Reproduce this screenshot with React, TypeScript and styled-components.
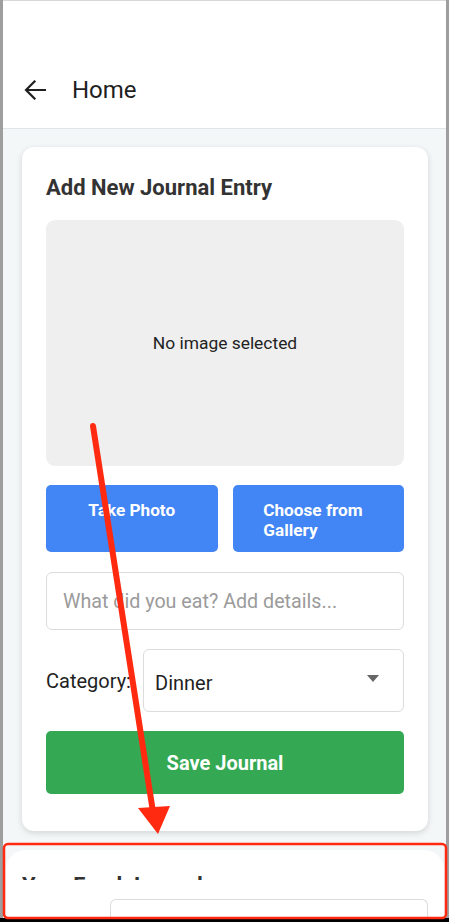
import React from "react";
import styled, { createGlobalStyle } from "styled-components";

const Global = createGlobalStyle`
  html, body { margin: 0; padding: 0; background: #000; }
  body { font-family: Roboto, "Noto Sans", Arial, sans-serif; }
  * { box-sizing: border-box; }
`;

const Frame = styled.div`
  position: relative;
  width: 449px;
  height: 922px;
  overflow: hidden;
  background: #000;
`;

const Screen = styled.div`
  height: 918px;
  margin: 0 3px 0 3px;
  border-top: 1px solid #d8d8d8;
  background: #f4f7f8;
  display: flex;
  flex-direction: column;
  overflow: hidden;
`;

const SideBar = styled.div<{ $side: "left" | "right" }>`
  position: absolute;
  top: 0;
  ${(p) => p.$side}: 0;
  width: 3px;
  height: 918px;
  background: #9e9e9e;
`;

const Header = styled.header`
  flex: none;
  height: 128px;
  background: #fff;
  border-bottom: 1px solid #e2e5e7;
  display: flex;
  align-items: flex-start;
  padding: 75px 0 0 20px;
  gap: 25px;
`;

const BackButton = styled.button`
  border: none;
  background: none;
  padding: 0;
  width: 24px;
  height: 28px;
  display: flex;
  align-items: center;
  justify-content: center;
  color: #1f1f1f;
`;

const HeaderTitle = styled.h1`
  margin: 0;
  font-size: 24px;
  font-weight: 400;
  color: #1f1f1f;
  line-height: 28px;
`;

const Content = styled.main`
  flex: 1;
  padding: 18px 18px 0 19px;
  display: flex;
  flex-direction: column;
`;

const Card = styled.section`
  background: #fff;
  border-radius: 12px;
  box-shadow: 0 2px 6px rgba(0, 0, 0, 0.14);
  padding: 28px 24px 37px 24px;
  display: flex;
  flex-direction: column;
`;

const CardTitle = styled.h2`
  margin: 0 0 19px 0;
  font-size: 22px;
  line-height: 26px;
  font-weight: 700;
  color: #333;
`;

const ImageBox = styled.div`
  height: 246px;
  background: #efefef;
  border-radius: 9px;
  display: flex;
  align-items: center;
  justify-content: center;
  font-size: 17.4px;
  color: #222;
  margin-bottom: 19px;
`;

const ButtonRow = styled.div`
  display: grid;
  grid-template-columns: 1fr 1fr;
  gap: 15px;
  margin-bottom: 20px;
`;

const BlueButton = styled.button`
  height: 67px;
  border: none;
  border-radius: 5px;
  background: #4285f4;
  color: #fff;
  font-family: Roboto, Arial, sans-serif;
  font-size: 17.2px;
  font-weight: 700;
  line-height: 20px;
  padding: 15px 12px 0;
  display: flex;
  justify-content: center;
  align-items: flex-start;
  text-align: left;
`;

const ButtonLabel = styled.span`
  display: block;
  max-width: 110px;
`;

const TextInput = styled.div`
  height: 58px;
  border: 1px solid #dcdcdc;
  border-radius: 6px;
  padding: 0 16px;
  display: flex;
  align-items: center;
  font-size: 19.7px;
  color: #9b9b9b;
  margin-bottom: 19px;
`;

const CategoryRow = styled.div`
  display: flex;
  align-items: center;
  margin-bottom: 19px;
`;

const CategoryLabel = styled.span`
  font-size: 20px;
  color: #1f1f1f;
  width: 97px;
  white-space: nowrap;
`;

const SelectBox = styled.div`
  flex: 1;
  height: 63px;
  border: 1px solid #dcdcdc;
  border-radius: 6px;
  display: flex;
  align-items: center;
  justify-content: space-between;
  padding: 4px 24px 0 11px;
  font-size: 20px;
  color: #1f1f1f;
`;

const Caret = styled.span`
  width: 0;
  height: 0;
  border-left: 6px solid transparent;
  border-right: 6px solid transparent;
  border-top: 7px solid #666;
  margin-top: -8px;
`;

const SaveButton = styled.button`
  height: 63px;
  border: none;
  border-radius: 5px;
  background: #34a853;
  color: #fff;
  font-family: Roboto, Arial, sans-serif;
  font-size: 20px;
  font-weight: 700;
`;

const JournalCard = styled.section`
  margin: 19px -16px 0 -16px;
  flex: 1;
  background: #fff;
  border-radius: 20px 20px 0 0;
  padding: 25px 0 0 16px;
  display: flex;
  flex-direction: column;
`;

const JournalTitleClip = styled.div`
  height: 5px;
  overflow: hidden;
`;

const JournalTitle = styled.h2`
  margin: 0;
  font-size: 22px;
  line-height: 22px;
  font-weight: 700;
  color: #333;
`;

const SearchBox = styled.div`
  margin: 19px 16px 0 88px;
  flex: 1;
  border: 1px solid #dcdcdc;
  border-bottom: none;
  border-radius: 6px 6px 0 0;
`;

const Overlay = styled.svg`
  position: absolute;
  inset: 0;
  pointer-events: none;
`;

const BottomBar = styled.div`
  height: 4px;
  background: #000;
`;

export default function App() {
  return (
    <>
      <Global />
      <Frame>
        <SideBar $side="left" />
        <SideBar $side="right" />
        <Screen>
          <Header>
            <BackButton aria-label="Back">
              <svg width="22" height="20" viewBox="0 0 22 20" fill="none">
                <path d="M21 10H2.5M10.5 1.5 2 10l8.5 8.5" stroke="#1f1f1f" strokeWidth="2.2" strokeLinecap="square" />
              </svg>
            </BackButton>
            <HeaderTitle>Home</HeaderTitle>
          </Header>
          <Content>
            <Card>
              <CardTitle>Add New Journal Entry</CardTitle>
              <ImageBox>No image selected</ImageBox>
              <ButtonRow>
                <BlueButton>
                  <ButtonLabel>Take Photo</ButtonLabel>
                </BlueButton>
                <BlueButton>
                  <ButtonLabel>Choose from Gallery</ButtonLabel>
                </BlueButton>
              </ButtonRow>
              <TextInput>What did you eat? Add details...</TextInput>
              <CategoryRow>
                <CategoryLabel>Category:</CategoryLabel>
                <SelectBox>
                  <span>Dinner</span>
                  <Caret />
                </SelectBox>
              </CategoryRow>
              <SaveButton>Save Journal</SaveButton>
            </Card>
            <JournalCard>
              <JournalTitleClip>
                <JournalTitle>Your Food Journal</JournalTitle>
              </JournalTitleClip>
              <SearchBox />
            </JournalCard>
          </Content>
        </Screen>
        <BottomBar />
        <Overlay width="449" height="922" viewBox="0 0 449 922">
          <path d="M93 426 L153 812" stroke="#ff2a10" strokeWidth="6" strokeLinecap="round" />
          <path d="M138 808 L170 806 L158 834 Z" fill="#ff2a10" />
          <rect x="4" y="844" width="442" height="74" rx="4" fill="none" stroke="#ff2a10" strokeWidth="2.5" />
        </Overlay>
      </Frame>
    </>
  );
}
